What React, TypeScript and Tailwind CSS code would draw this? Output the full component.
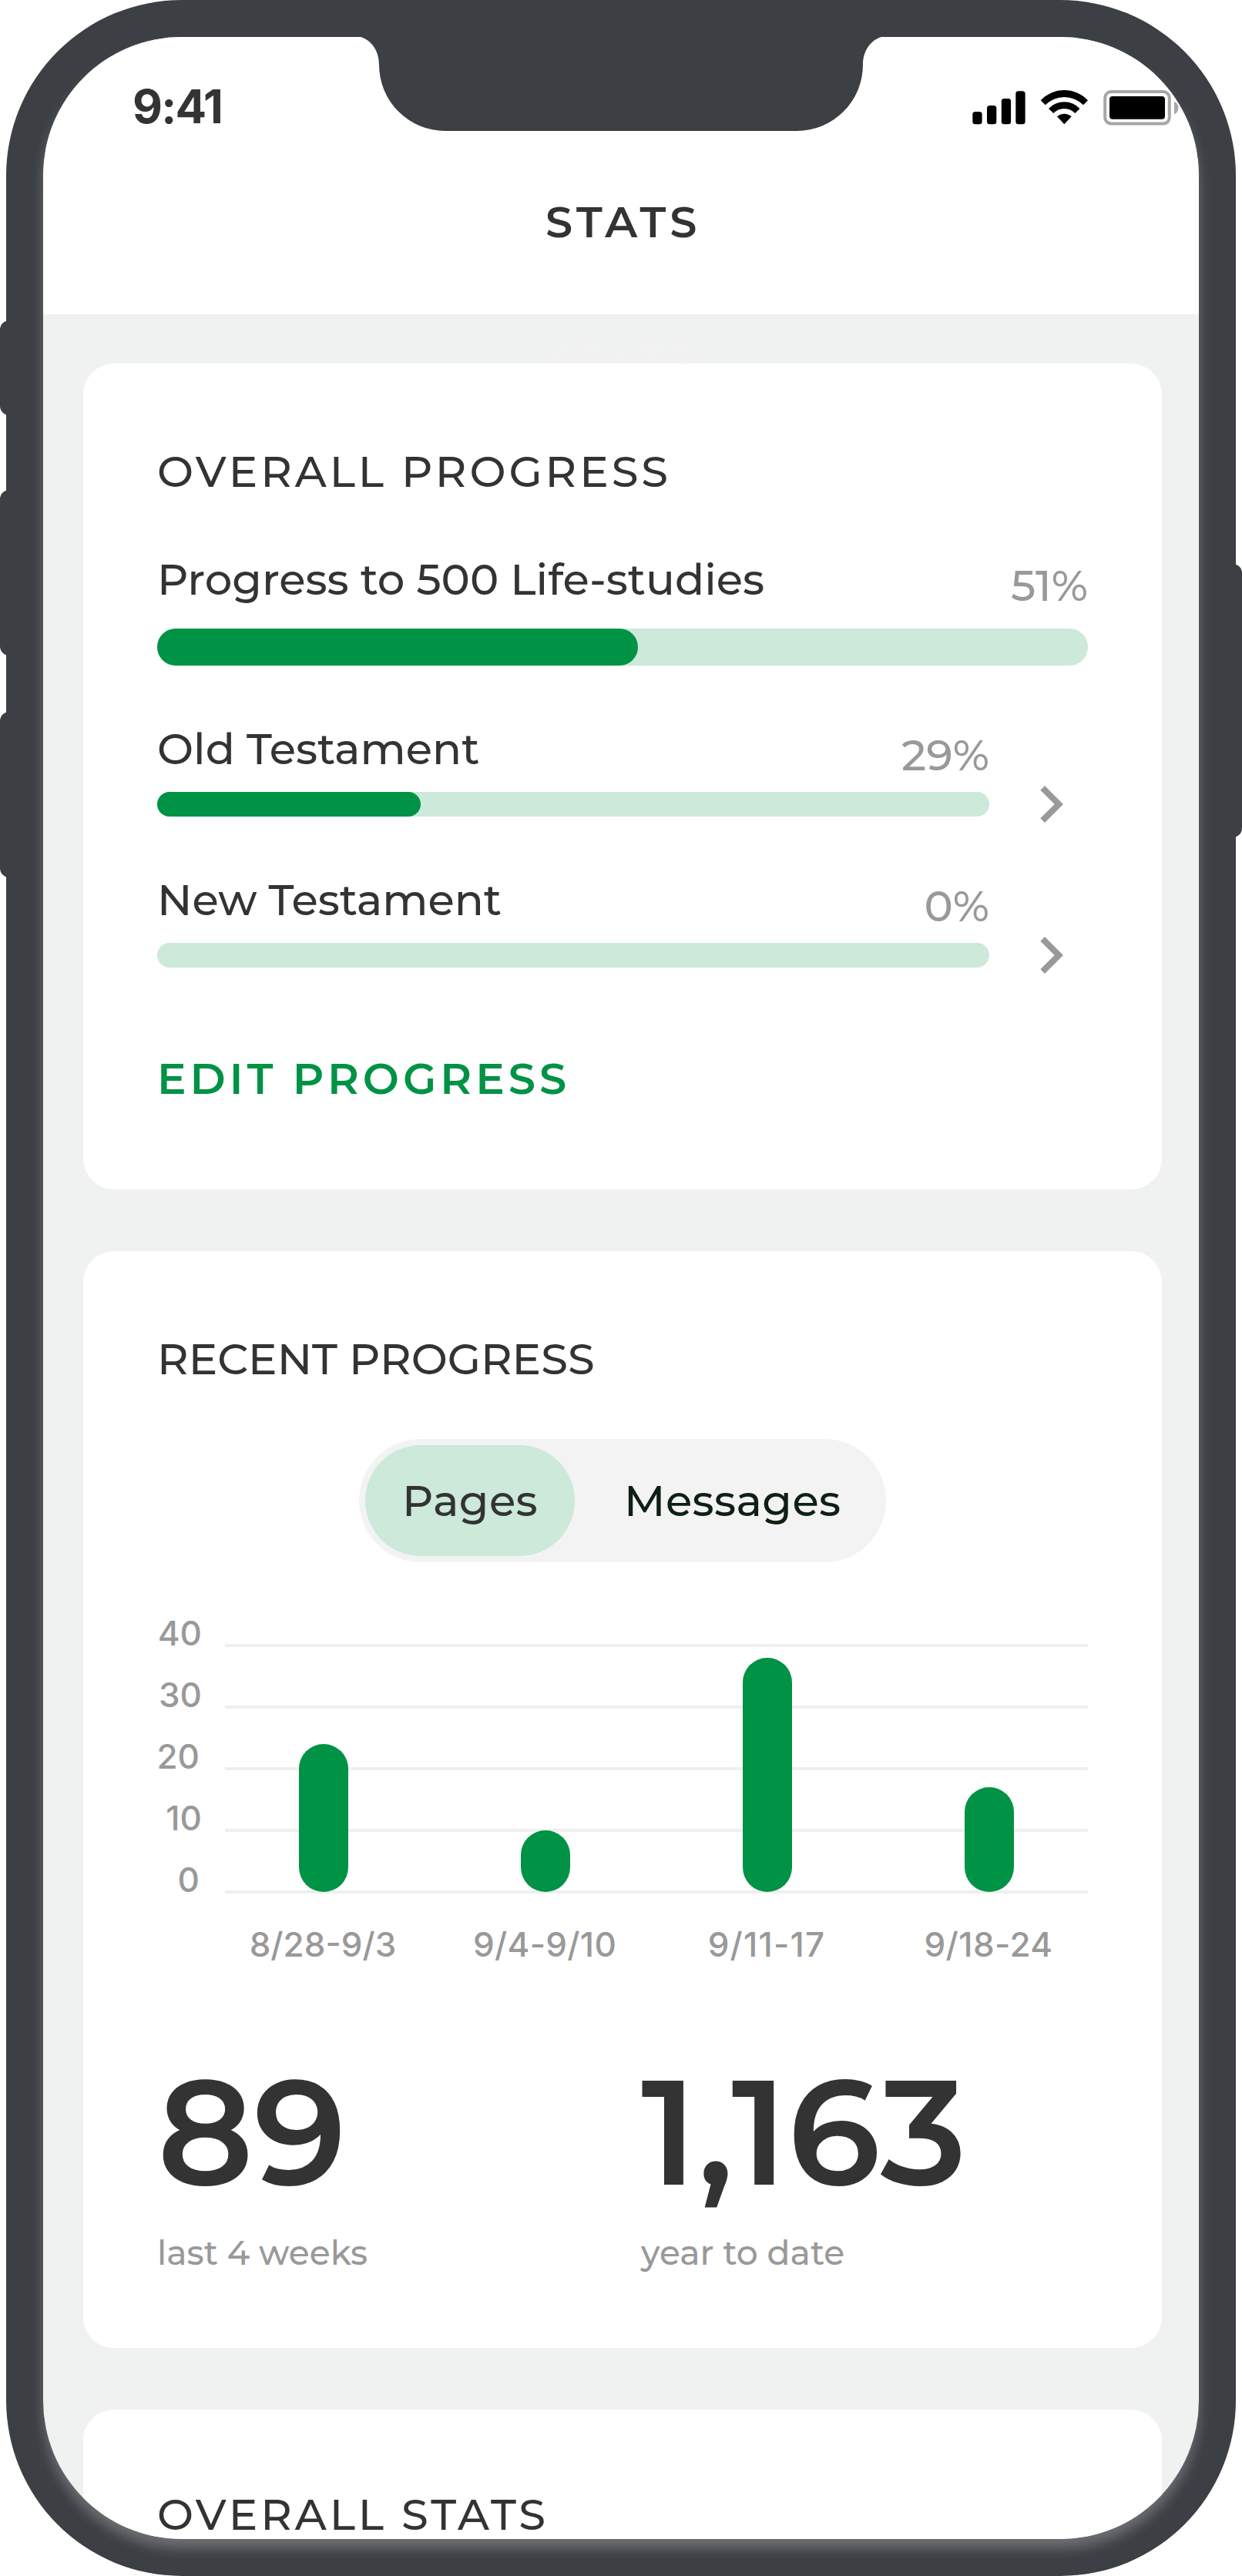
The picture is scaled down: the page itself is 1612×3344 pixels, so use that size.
import { useState } from 'react'
import type { ReactNode } from 'react'

const yTicks = [
  { label: '40', y: 48, x: 58 },
  { label: '30', y: 128, x: 58 },
  { label: '20', y: 208, x: 55 },
  { label: '10', y: 288, x: 58 },
  { label: '0', y: 368, x: 55 },
]

const weeks = [
  { label: '8/28-9/3', pages: 24, messages: 6, spacing: 0 },
  { label: '9/4-9/10', pages: 10, messages: 3, spacing: 0.3 },
  { label: '9/11-17', pages: 38, messages: 9, spacing: 1.2 },
  { label: '9/18-24', pages: 17, messages: 4, spacing: 0.4 },
]

const testaments = [
  { name: 'Old Testament', percent: '29%', fill: 342 },
  { name: 'New Testament', percent: '0%', fill: 0 },
]

function StatusIcons() {
  return (
    <svg width="268" height="46" viewBox="0 0 268 46" className="mt-[15px]">
      {/* Signal */}
      <rect x="0.3" y="28" width="12.3" height="16.3" rx="3.5" />
      <rect x="19" y="20" width="12.3" height="24.3" rx="3.5" />
      <rect x="37.8" y="11" width="12.3" height="33.3" rx="3.5" />
      <rect x="56.3" y="1.3" width="12.3" height="43" rx="3.5" />
      {/* Wifi */}
      <path d="M88.7 13.3A42 42 0 0 1 150 13.3L144 19.3A34.6 34.6 0 0 0 94.7 19.3Z" />
      <path d="M99 24A27.7 27.7 0 0 1 139.5 24L133.3 30A19.3 19.3 0 0 0 105.3 30Z" />
      <path d="M110 34.3A14 14 0 0 1 128.7 34.3L119.3 44.3Z" />
      {/* Battery */}
      <rect x="172.2" y="2" width="83.6" height="41.6" rx="8" fill="none" stroke="#a6a6a6" strokeWidth="4" />
      <rect x="178" y="8" width="72" height="29.7" rx="4" />
      <path d="M262 14.7C265.5 16.2 267.4 19.3 267.4 23S265.5 29.8 262 31.3Z" fill="#a6a6a6" />
    </svg>
  )
}

function Card({ children, className = '' }: { children: ReactNode, className?: string }) {
  return (
    <section className={`relative bg-white rounded-[40px] px-24 ${className}`}>
      {children}
    </section>
  )
}

function ProgressLabel({ name, percent }: { name: string, percent: string }) {
  return (
    <div className="flex justify-between items-start">
      <span>{name}</span>
      <span className="pt-2 text-[#999999]">{percent}</span>
    </div>
  )
}

function Chart({ metric }: { metric: 'pages' | 'messages' }) {
  return (
    <svg width="1208" height="468" viewBox="0 0 1208 468" className="mt-[60px] font-['Inter',sans-serif] font-medium text-[44px]">
      {yTicks.map((t) => (
        <g key={t.label}>
          <rect x="88" y={t.y - 2} width="1120" height="4" fill="#efefef" />
          <text x={t.x} y={t.y} textAnchor="end" fill="#999999">{t.label}</text>
        </g>
      ))}
      {weeks.map((w, i) => (
        <g key={w.label}>
          <rect x={184 + i * 288} y={368 - w[metric] * 8} width="64" height={w[metric] * 8} rx="32" fill="#009245" />
          <text x={215 + i * 288} y="452" textAnchor="middle" letterSpacing={w.spacing} fill="#999999">{w.label}</text>
        </g>
      ))}
    </svg>
  )
}

export default function App() {
  const [metric, setMetric] = useState<'pages' | 'messages'>('pages')

  return (
    <div className="relative w-[1612px] h-[3344px] overflow-hidden bg-white px-2 font-['Montserrat','Inter',sans-serif] font-medium text-[56px] leading-[68px] text-[#333333]">
      {/* Side buttons */}
      <div className="absolute left-0 top-[416px] w-8 h-[123px] rounded-xl bg-[#3c3f44]" />
      <div className="absolute left-0 top-[636px] w-8 h-[215px] rounded-xl bg-[#3c3f44]" />
      <div className="absolute left-0 top-[924px] w-8 h-[215px] rounded-xl bg-[#3c3f44]" />
      <div className="absolute right-0 top-[732px] w-8 h-[355px] rounded-xl bg-[#3c3f44]" />

      <div className="relative h-full overflow-hidden rounded-[228px] bg-[#3c3f44] p-12">
        <div className="h-full flex flex-col overflow-hidden rounded-[180px] bg-[#f0f2f1] shadow-[0_12px_16px_rgba(255,255,255,0.25)]">
          <header className="h-[360px] shrink-0 bg-white pt-[54px]">
            <div className="flex justify-between items-start pl-[116px] pr-[26px]">
              <span className="font-['Inter',sans-serif] font-bold text-[60px] leading-[73px] tracking-[-1.8px]">9:41</span>
              <StatusIcons />
            </div>
            <h1 className="mt-[79px] pl-[6px] text-center font-semibold tracking-[5.4px]">STATS</h1>
          </header>

          <main className="relative flex flex-col gap-20 pt-16 pl-[52px] pr-12">
            {/* Large title, scrolled under the first card */}
            <span aria-hidden="true" className="absolute inset-x-0 top-[27px] pl-[7px] text-center tracking-[4px] text-[#f3f2f2]">STATS</span>

            <Card className="pt-[106px] pb-[110px]">
              <h2 className="tracking-[3.92px]">OVERALL PROGRESS</h2>

              <div className="mt-[72px]">
                <ProgressLabel name="Progress to 500 Life-studies" percent="51%" />
                <div className="mt-[22px] h-12 rounded-full bg-[#cce9d9]">
                  <div className="w-[624px] h-full rounded-full bg-[#009245]" />
                </div>
              </div>

              {testaments.map((t) => (
                <div key={t.name} className="mt-[74px] flex items-end gap-8">
                  <div className="w-[1080px]">
                    <ProgressLabel name={t.name} percent={t.percent} />
                    <div className="mt-3.5 h-8 rounded-full bg-[#cce9d9]">
                      <div className="h-full rounded-full bg-[#009245]" style={{ width: t.fill }} />
                    </div>
                  </div>
                  <svg width="96" height="96" viewBox="0 0 24 24" fill="#999999" className="-mb-8 shrink-0">
                    <path d="M10 6 8.59 7.41 13.17 12l-4.58 4.59L10 18l6-6z" />
                  </svg>
                </div>
              ))}

              <button className="mt-[110px] block font-semibold tracking-[5px] text-[#009245]">EDIT PROGRESS</button>
            </Card>

            <Card className="pt-[106px] pb-[97px]">
              <h2>RECENT PROGRESS</h2>

              <div className="mt-[70px] mx-auto flex w-[684px] h-40 rounded-full bg-[#f3f3f3] p-2">
                <button
                  className="w-[272px] rounded-full bg-[#cce9d9] tracking-[0.4px]"
                  onClick={() => setMetric('pages')}
                >
                  Pages
                </button>
                <button className="pl-16 text-[#0e1f14] tracking-[0.4px]" onClick={() => setMetric('messages')}>
                  Messages
                </button>
              </div>

              <Chart metric={metric} />

              <div className="mt-[94px] flex">
                <div className="w-[628px]">
                  <p className="font-semibold text-[192px] leading-[234px]">89</p>
                  <p className="mt-[13px] text-[44px] leading-[54px] text-[#999999]">last 4 weeks</p>
                </div>
                <div>
                  <p className="font-semibold text-[192px] leading-[234px]">1,163</p>
                  <p className="mt-[13px] text-[44px] leading-[54px] text-[#999999]">year to date</p>
                </div>
              </div>
            </Card>

            <Card className="pt-[106px] pb-40">
              <h2 className="leading-[60px] tracking-[3.92px]">OVERALL STATS</h2>
            </Card>
          </main>
        </div>

        {/* Notch */}
        <svg width="676" height="123" viewBox="468 47 676 123" className="absolute top-[47px] left-[460px]" fill="#3c3f44">
          <path d="M468 47V48C482 52 492 66 492 84A86 86 0 0 0 578 170H1034A86 86 0 0 0 1120 84C1120 66 1130 52 1144 48V47Z" />
        </svg>
      </div>
    </div>
  )
}
